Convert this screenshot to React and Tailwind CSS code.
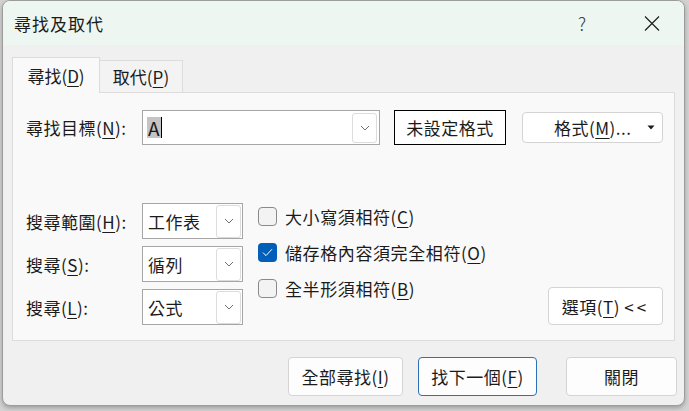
import React from "react";

const U = ({ children }) => (
  <span className="underline underline-offset-[3px] decoration-1">{children}</span>
);

function Chevron() {
  return (
    <svg width="10" height="6" viewBox="0 0 10 6">
      <path d="M1 1l4 4 4-4" fill="none" stroke="#707070" strokeWidth="1" />
    </svg>
  );
}

function Select({ value }) {
  return (
    <div className="w-[101px] h-[36px] border border-[#a6a6a6] bg-white flex items-center pl-[5px] pr-px">
      <span className="flex-1 tracking-[0.5px]">{value}</span>
      <div className="w-[25px] h-[33px] border border-[#dcdcdc] rounded-[3px] bg-white flex items-center justify-center">
        <Chevron />
      </div>
    </div>
  );
}

function Check({ checked, children }) {
  return (
    <div className="h-[26px] flex items-center gap-[8px]">
      {checked ? (
        <div className="w-[19px] h-[19px] rounded-[4px] bg-[#005fb8] flex items-center justify-center">
          <svg width="11" height="9" viewBox="0 0 11 9">
            <path d="M1 4.6l3 3 6-6.4" fill="none" stroke="white" strokeWidth="1" />
          </svg>
        </div>
      ) : (
        <div className="w-[19px] h-[19px] rounded-[4px] border border-[#8a8a8a] bg-[#f3f3f3]" />
      )}
      <span className="tracking-[0.6px]">{children}</span>
    </div>
  );
}

function Btn({ w, primary, children }) {
  return (
    <div
      className={
        "h-[39px] rounded-[4px] bg-[#fdfdfd] flex items-center justify-center tracking-[0.5px] " +
        (primary ? "border border-[#2f6fb6]" : "border border-[#d4d4d4]")
      }
      style={{ width: w }}
    >
      {children}
    </div>
  );
}

export default function App() {
  return (
    <div className="w-[689px] h-[411px] bg-[#d2d2d2] pl-[2px] font-['Noto_Sans_CJK_TC','Noto_Sans',sans-serif] text-[17px] leading-none text-[#1b1b1b]">
      <div className="w-[683px] h-[406px] rounded-[8px] border border-[#9c9c9c] bg-[#f0f0f0] overflow-hidden flex flex-col shadow-[0_2px_4px_rgba(0,0,0,0.25)]">
        {/* title bar */}
        <div className="h-[44px] bg-[#edf6f1] flex items-center pl-[11px] pr-[24px]">
          <span className="text-[17px] tracking-[1px]">尋找及取代</span>
          <span className="ml-auto text-[18px] font-light text-[#404040]">?</span>
          <svg className="ml-[58px]" width="16" height="15" viewBox="0 0 16 15">
            <path d="M1 0.5l14 14M15 0.5l-14 14" stroke="#1b1b1b" strokeWidth="1.1" fill="none" />
          </svg>
        </div>

        {/* body */}
        <div className="flex-1 flex flex-col px-[9px] pt-[12px]">
          {/* tabs */}
          <div className="flex items-end">
            <div className="relative z-10 -mb-px w-[88px] h-[36px] border border-b-0 border-[#dcdcdc] bg-[#f9f9f9] flex items-center justify-center pb-[1px]">
              尋找(<U>D</U>)
            </div>
            <div className="w-[83px] h-[32px] border border-l-0 border-b-0 border-[#dcdcdc] bg-[#f3f3f3] flex items-center justify-center">
              取代(<U>P</U>)
            </div>
          </div>

          {/* panel */}
          <div className="relative h-[249px] border border-[#dcdcdc] bg-[#f9f9f9] pl-[13px] pr-[11px] pt-[17px] flex flex-col">
            {/* row 1 */}
            <div className="flex items-center h-[35px]">
              <span className="w-[116px] tracking-[0.5px]">
                尋找目標(<U>N</U>):
              </span>
              <div className="w-[238px] h-[35px] border border-[#a6a6a6] bg-white flex items-center pl-[4px] pr-[2px]">
                <div className="flex-1 flex items-center">
                  <span className="bg-[#c4c4c4] text-[19px] h-[21px] px-px flex items-center">A</span>
                  <span className="w-px h-[21px] bg-black" />
                </div>
                <div className="w-[25px] h-[30px] border border-[#dcdcdc] rounded-[3px] flex items-center justify-center">
                  <Chevron />
                </div>
              </div>
              <div className="ml-[14px] w-[112px] h-[35px] border border-black bg-white flex items-center justify-center tracking-[0.5px]">
                未設定格式
              </div>
              <div className="ml-[16px] w-[141px] h-[31px] rounded-[4px] border border-[#d4d4d4] bg-white flex items-center pl-[31px] pr-[7px]">
                <span className="flex-1 tracking-[0.5px]">
                  格式(<U>M</U>)...
                </span>
                <svg width="8" height="5" viewBox="0 0 8 5">
                  <path d="M0.5 0.5h7l-3.5 4z" fill="#1b1b1b" />
                </svg>
              </div>
            </div>

            {/* lower rows */}
            <div className="flex mt-[58px]">
              <div className="flex flex-col gap-[7px]">
                <div className="flex items-center">
                  <span className="w-[116px] tracking-[0.5px]">
                    搜尋範圍(<U>H</U>):
                  </span>
                  <Select value="工作表" />
                </div>
                <div className="flex items-center">
                  <span className="w-[116px] tracking-[0.5px]">
                    搜尋(<U>S</U>):
                  </span>
                  <Select value="循列" />
                </div>
                <div className="flex items-center">
                  <span className="w-[116px] tracking-[0.5px]">
                    搜尋(<U>L</U>):
                  </span>
                  <Select value="公式" />
                </div>
              </div>
              <div className="ml-[15px] flex flex-col gap-[10px]">
                <Check>
                  大小寫須相符(<U>C</U>)
                </Check>
                <Check checked>
                  儲存格內容須完全相符(<U>O</U>)
                </Check>
                <Check>
                  全半形須相符(<U>B</U>)
                </Check>
              </div>
              <div className="flex-1 flex items-end justify-end">
                <div className="w-[115px] h-[38px] rounded-[4px] border border-[#d4d4d4] bg-white flex items-center justify-center tracking-[0.5px]">
                  選項(<U>T</U>)&nbsp;<span className="tracking-[3px]">&lt;&lt;</span>
                </div>
              </div>
            </div>
          </div>

          {/* bottom buttons */}
          <div className="flex justify-end mt-[16px] -mr-[2px]">
            <Btn w={115}>
              全部尋找(<U>I</U>)
            </Btn>
            <div className="ml-[15px]">
              <Btn w={119} primary>
                找下一個(<U>F</U>)
              </Btn>
            </div>
            <div className="ml-[29px]">
              <Btn w={111}>關閉</Btn>
            </div>
          </div>
        </div>
      </div>
    </div>
  );
}
